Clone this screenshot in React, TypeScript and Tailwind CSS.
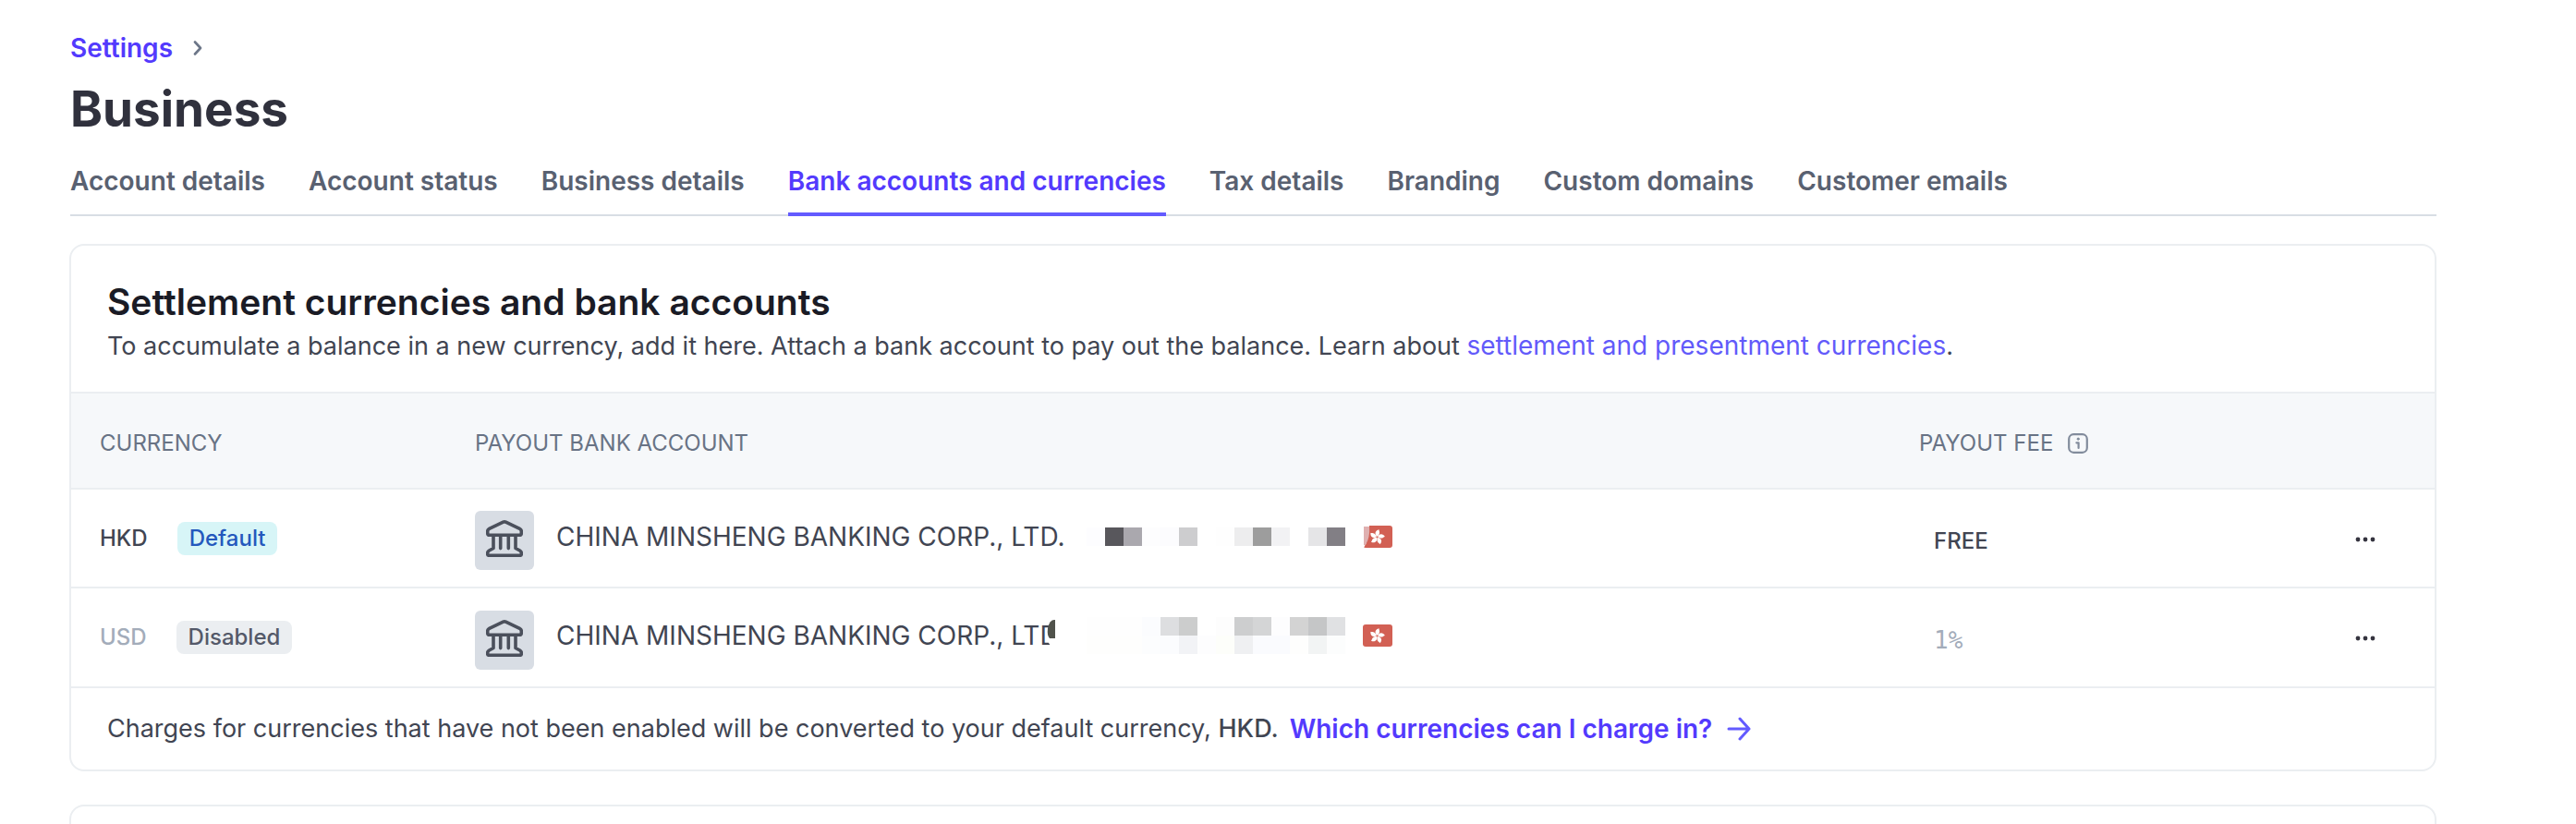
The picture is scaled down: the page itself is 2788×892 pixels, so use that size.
import React from "react";

const tabs = [
  "Account details",
  "Account status",
  "Business details",
  "Bank accounts and currencies",
  "Tax details",
  "Branding",
  "Custom domains",
  "Customer emails",
];

function BankIcon() {
  return (
    <span className="flex size-16 shrink-0 items-center justify-center rounded-md bg-[#d8dde4] pb-1">
      <svg viewBox="0 0 40 40" className="size-10" fill="none" stroke="#4b505c" strokeWidth="3.6" strokeLinejoin="round" strokeLinecap="round" aria-hidden="true">
        <path d="M18.6 2.2 Q20 1.5 21.4 2.2 L36.5 9.4 Q38.3 10.3 38.3 12.2 V14 Q38.3 16.3 36 16.3 H4 Q1.7 16.3 1.7 14 V12.2 Q1.7 10.3 3.5 9.4 Z" />
        <path d="M8 17 V30.5 L3.4 33 Q1.7 34 1.7 35.5 V36.8 Q1.7 38.3 3.2 38.3 H36.8 Q38.3 38.3 38.3 36.8 V35.5 Q38.3 34 36.6 33 L32 30.5 V17" />
        <path d="M15.7 18 V30.6 M24.3 18 V30.6" />
      </svg>
    </span>
  );
}

function Flag({ faded }: { faded: boolean }) {
  return (
    <svg viewBox="0 0 32 24" className="ml-[19px] h-6 w-8 shrink-0" role="img" aria-label="Hong Kong">
      <rect width="32" height="24" rx="3" fill="#d26054" />
      <g fill="#fff" transform="translate(15.5 12.4)">
        {[0, 72, 144, 216, 288].map((a) => (
          <path key={a} transform={`rotate(${a + 12})`} d="M0 -0.6 C-3.6 -2 -4 -6.6 0.4 -8.4 C0 -7 3.6 -5.4 0 -0.6 Z" />
        ))}
      </g>
      {faded && (
        <>
          <path d="M0 0 H7 Q7 14 1 24 H0 Z" fill="#fff" />
          <path d="M1 1 H7 Q8 12 3 21 H1 Z" fill="#dfb0b0" />
        </>
      )}
    </svg>
  );
}

function Mosaic({ rows }: { rows: string[][] }) {
  return (
    <span className="flex flex-col" aria-hidden="true">
      {rows.map((cells, r) => (
        <span key={r} className="flex">
          {cells.map((c, i) => (
            <span key={i} className="size-5" style={{ backgroundColor: c }} />
          ))}
        </span>
      ))}
    </span>
  );
}

const W = "#ffffff";
const mosaicA = [["#fdfdff", "#58575c", "#aaa8ae", "#fdfdfe", "#fcfcfe", "#cdcdcf", W, "#fefefe", "#ededee", "#9d9d9d", "#f2f2f4", W, "#e5e5e7", "#827f85"]];
const mosaicB = [
  ["#fefefe", "#fefefe", "#fefefe", "#fbfcfe", "#dddee0", "#cccdcd", W, "#fdfdfd", "#cdcecf", "#d4d5d6", "#fdfdfe", "#d3d3d3", "#c5c6c7", "#e0e1e3"],
  ["#fefefd", "#fefefd", "#fefefd", "#fcfdfe", "#fbfcfe", "#f2f3f6", "#fdfdfe", "#fdfefa", "#eff0f2", "#fafbfe", "#fafbfe", "#fefefd", "#f2f4f4", "#fcfdfd"],
];

function More({ currency }: { currency: string }) {
  return (
    <button type="button" aria-label={`More options for ${currency}`} className="flex h-8 items-center">
      <svg viewBox="0 0 24 6" className="h-1.5 w-6" fill="#35343f">
        <circle cx="4" cy="3" r="2.4" />
        <circle cx="12" cy="3" r="2.4" />
        <circle cx="20" cy="3" r="2.4" />
      </svg>
    </button>
  );
}

export default function App() {
  return (
    <main className="min-h-screen bg-white pl-[75px] pr-[151px] pt-8 font-['Inter',sans-serif] text-[28px] leading-10 text-[#414552]">
      <nav aria-label="Breadcrumb" className="flex items-center gap-[22px] pl-px">
        <a href="#settings" className="font-semibold text-[#533afd]">Settings</a>
        <svg viewBox="0 0 10 16" className="h-4 w-2.5" fill="none" stroke="#6c7688" strokeWidth="2.6" strokeLinecap="round" strokeLinejoin="round" aria-hidden="true">
          <path d="M2 1.5 L8 8 L2 14.5" />
        </svg>
      </nav>
      <h1 className="mt-3 pl-px text-[53px] font-bold leading-[68px] text-[#30313d]">Business</h1>

      <nav aria-label="Business settings" className="ml-px mt-6 flex gap-[47px] border-b-2 border-[#d8dee4] font-semibold text-[#596171]">
        {tabs.map((t, i) => (
          <a
            key={t}
            href="#tab"
            aria-current={i === 3 ? "page" : undefined}
            className={i === 3 ? "-mb-0.5 border-b-4 border-[#635bff] pb-3.5 text-[#533afd]" : "pb-4"}
          >
            {t}
          </a>
        ))}
      </nav>

      <section className="mt-[30px] overflow-hidden rounded-2xl border-2 border-[#ebeef1]">
        <header className="px-[39px] pb-[29px] pt-9">
          <h2 className="text-[39px] font-semibold leading-[50px] text-[#1a1b25]">Settlement currencies and bank accounts</h2>
          <p className="mt-0.5 text-[27px]">
            To accumulate a balance in a new currency, add it here. Attach a bank account to pay out the balance. Learn about{" "}
            <a href="#currencies" className="text-[28px] text-[#625afa]">settlement and presentment currencies</a>.
          </p>
        </header>

        <table className="w-full table-fixed border-collapse text-left">
          <colgroup>
            <col className="w-[437px]" />
            <col />
            <col className="w-[471px]" />
            <col className="w-[87px]" />
          </colgroup>
          <thead>
            <tr className="h-[104px] border-y-2 border-[#ebeef1] bg-[#f6f8fa] text-2xl text-[#687385]">
              <th scope="col" className="pl-[31px] pt-1.5 font-normal">CURRENCY</th>
              <th scope="col" className="pt-1.5 font-normal">PAYOUT BANK ACCOUNT</th>
              <th scope="col" className="pt-1.5 font-normal">
                <span className="flex items-center gap-4">
                  PAYOUT FEE
                  <svg viewBox="0 0 22 22" className="size-[22px]" fill="none" stroke="#828c9c" strokeWidth="2.2" strokeLinecap="round" strokeLinejoin="round" aria-hidden="true">
                    <rect x="1.2" y="1.2" width="19.6" height="19.6" rx="5" />
                    <path d="M9.4 10.3 H11.6 V16" />
                    <circle cx="11.2" cy="6.2" r="1.1" fill="#828c9c" strokeWidth="1" />
                  </svg>
                </span>
              </th>
              <th scope="col" aria-label="Actions" />
            </tr>
          </thead>
          <tbody>
            <tr className="h-[107px] border-b-2 border-[#ebeef1]">
              <td className="pl-[31px]">
                <span className="flex items-center gap-8 text-2xl font-medium">
                  HKD
                  <span className="rounded-lg bg-[#d7f5f7] px-[13px] py-0.5 leading-8 text-[#2458bd]">Default</span>
                </span>
              </td>
              <td className="pt-1">
                <span className="flex items-center">
                  <BankIcon />
                  <span className="ml-6 flex items-center pb-2">
                    <span className="w-[574px] shrink-0">CHINA MINSHENG BANKING CORP., LTD.</span>
                    <Mosaic rows={mosaicA} />
                    <Flag faded />
                  </span>
                </span>
              </td>
              <td className="pl-4 pt-1.5 text-2xl font-medium">FREE</td>
              <td className="pt-0.5"><More currency="HKD" /></td>
            </tr>
            <tr className="h-[108px] border-b-2 border-[#ebeef1]">
              <td className="pl-[31px]">
                <span className="flex items-center gap-8 text-2xl font-medium">
                  <span className="text-[#a3acba]">USD</span>
                  <span className="rounded-lg bg-[#ebeef1] px-[13px] py-0.5 leading-8 text-[#545969]">Disabled</span>
                </span>
              </td>
              <td className="pt-1.5">
                <span className="flex items-center">
                  <BankIcon />
                  <span className="ml-6 flex items-center pb-2.5">
                    <span className="w-[574px] shrink-0">
                      CHINA MINSHENG BANKING CORP., LT
                      <span className="relative">
                        D
                        <svg viewBox="0 0 20 40" className="absolute left-2 top-0 h-10 w-5" aria-hidden="true">
                          <path d="M5 0 H20 V40 H4 V28 L0 22 Z" fill="#fff" />
                          <path d="M8 0 Q3 0 1 9 Q0 17 3 20 H9 V0 Z" fill="#50524b" />
                        </svg>
                      </span>
                    </span>
                    <Mosaic rows={mosaicB} />
                    <Flag faded={false} />
                  </span>
                </span>
              </td>
              <td className="pl-4 pt-1.5 font-['DejaVu_Sans_Mono',monospace] text-[26px] text-[#a3acba]">1%</td>
              <td className="pt-0.5"><More currency="USD" /></td>
            </tr>
          </tbody>
        </table>

        <p className="flex items-center px-[39px] py-6 text-[27px]">
          Charges for currencies that have not been enabled will be converted to your default currency,&nbsp;<span className="font-medium">HKD.</span>
          <a href="#charge" className="ml-3 flex items-center gap-4 text-[28px] font-semibold text-[#533afd]">
            Which currencies can I charge in?
            <svg viewBox="0 0 26 26" className="size-[26px]" fill="none" stroke="#635bff" strokeWidth="3" strokeLinecap="round" strokeLinejoin="round" aria-hidden="true">
              <path d="M2 13 H24 M14 2 L24 13 L14 24" />
            </svg>
          </a>
        </p>
      </section>

      <section aria-label="More settings" className="mt-9 h-[21px] rounded-t-2xl border-2 border-b-0 border-[#ebeef1]" />
    </main>
  );
}
